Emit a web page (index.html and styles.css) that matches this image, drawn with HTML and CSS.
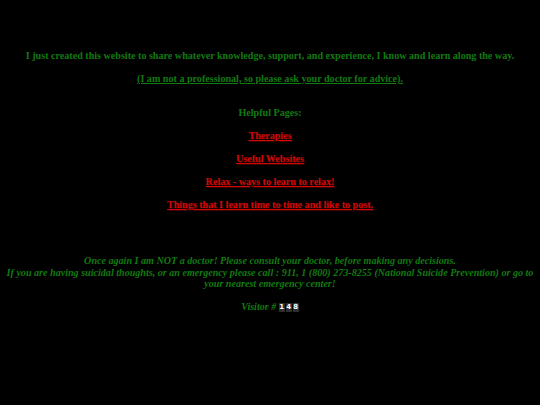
FILE: index.html
```html
<!DOCTYPE html>
<html>
<head>
<meta charset="utf-8">
<link rel="stylesheet" href="styles.css">
</head>
<body>
<div class="page">
<p class="intro">I just created this website to share whatever knowledge, support, and experience, I know and learn along the way.</p>
<p class="intro"><a class="green-link" href="#">(I am not a professional, so please ask your doctor for advice).</a></p>
<p class="heading">Helpful Pages:</p>
<p><a class="red-link" href="#">Therapies</a></p>
<p><a class="red-link" href="#">Useful Websites</a></p>
<p><a class="red-link" href="#">Relax - ways to learn to relax!</a></p>
<p><a class="red-link" href="#">Things that I learn time to time and like to post.</a></p>
<p class="warning">Once again I am NOT a doctor! Please consult your doctor, before making any decisions.<br>If you are having suicidal thoughts, or an emergency please call : 911, 1 (800) 273-8255 (National Suicide Prevention) or go to your nearest emergency center!</p>
<p class="visitor">Visitor # <span class="counter"><span class="digit">1</span><span class="digit">4</span><span class="digit">8</span></span></p>
</div>
</body>
</html>
```
FILE: styles.css
```css
html, body {
  background: #000;
}
body {
  margin: 8px 5px;
  font-family: "Liberation Serif", "Times New Roman", serif;
  font-size: 10.1px;
  font-weight: bold;
  color: #127a12;
  text-align: center;
}
.page {
  padding-top: 31px;
}
p {
  margin: 11px 0;
  line-height: 12px;
}
.heading {
  margin-top: 22px;
}
.green-link {
  color: #127a12;
  text-decoration: underline;
}
.red-link {
  color: #d00808;
  text-decoration: underline;
  text-shadow: 1px 1px 1px #400000;
}
.warning {
  margin-top: 44px;
  font-style: italic;
  line-height: 11.5px;
}
.visitor {
  font-style: italic;
  margin-top: 10px;
}
.counter {
  display: inline-flex;
  gap: 1px;
  vertical-align: 1px;
}
.digit {
  display: inline-block;
  width: 6px;
  height: 9px;
  background: #2e2e2e;
  color: #fff;
  font-family: "DejaVu Sans", sans-serif;
  font-style: normal;
  font-size: 7px;
  line-height: 9px;
  text-align: center;
}
```
